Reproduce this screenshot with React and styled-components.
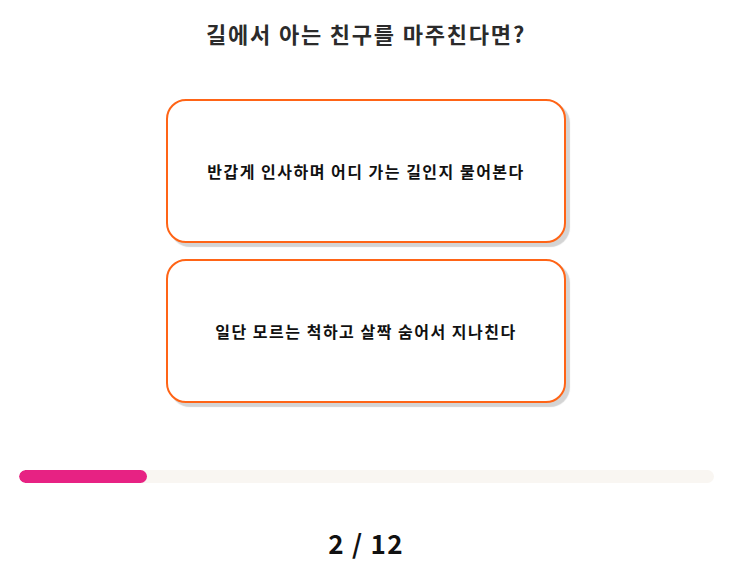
import React from 'react';
import styled, { createGlobalStyle } from 'styled-components';

const GlobalStyle = createGlobalStyle`
  body {
    margin: 0;
    background: #ffffff;
    font-family: "Noto Sans CJK KR", "Noto Sans", sans-serif;
  }
`;

const Page = styled.div`
  width: 732px;
  display: flex;
  flex-direction: column;
  align-items: center;
`;

const Question = styled.h1`
  margin: 20px 0 0;
  font-size: 22px;
  line-height: 26px;
  letter-spacing: 1.8px;
  font-weight: 700;
  color: #2b2b2b;
`;

const Choices = styled.div`
  margin-top: 53px;
  display: flex;
  flex-direction: column;
  gap: 16px;
`;

const Choice = styled.button`
  width: 400px;
  height: 144px;
  box-sizing: border-box;
  border: 2px solid #ff6416;
  border-radius: 20px;
  background: #ffffff;
  box-shadow: 4px 4px 1px #d4d4d4;
  font-family: inherit;
  font-size: 16px;
  letter-spacing: 1.5px;
  font-weight: 700;
  color: #111111;
  cursor: pointer;
  display: flex;
  align-items: center;
  justify-content: center;
`;

const Track = styled.div`
  margin-top: 67px;
  width: 695px;
  height: 13px;
  border-radius: 7px;
  background: #f9f6f2;
  overflow: hidden;
`;

const Fill = styled.div`
  height: 100%;
  border-radius: 7px;
  background: #e72283;
`;

const Counter = styled.div`
  margin-top: 44px;
  font-size: 26px;
  line-height: 32px;
  letter-spacing: 1.3px;
  font-weight: 700;
  color: #111111;
`;

const App = () => {
  const current = 2;
  const total = 12;
  const choices = [
    '반갑게 인사하며 어디 가는 길인지 물어본다',
    '일단 모르는 척하고 살짝 숨어서 지나친다',
  ];

  return (
    <Page>
      <GlobalStyle />
      <Question>길에서 아는 친구를 마주친다면?</Question>
      <Choices>
        {choices.map((text) => (
          <Choice key={text}>{text}</Choice>
        ))}
      </Choices>
      <Track>
        <Fill style={{ width: '128px' }} />
      </Track>
      <Counter>
        {current} / {total}
      </Counter>
    </Page>
  );
};

export default App;
